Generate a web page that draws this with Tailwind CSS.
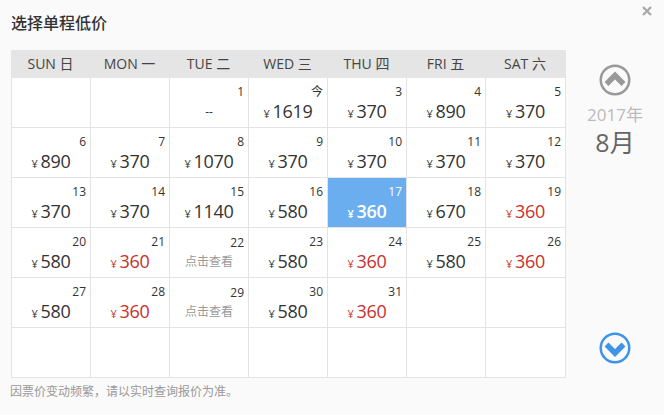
<!DOCTYPE html>
<html lang="zh">
<head>
<meta charset="utf-8">
<title>选择单程低价</title>
<script src="https://cdn.jsdelivr.net/npm/@tailwindcss/browser@4"></script>
</head>
<body class="w-[664px] h-[415px] overflow-hidden bg-[#fafafa] font-['Open_Sans','Noto_Sans_CJK_SC',sans-serif] text-[#333]">
<div class="relative h-[415px] pl-[11px] pt-[13px]">
  <button class="absolute right-[11px] top-[5px] text-[#aaa]">
    <svg width="12" height="12" viewBox="0 0 12 12"><path d="M2 2l8 8M10 2l-8 8" stroke="currentColor" stroke-width="2.4"/></svg>
  </button>
  <h1 class="h-[20px] text-[16px] leading-[20px] font-medium text-[#333]">选择单程低价</h1>
  <div class="flex mt-[17px]">
    <div class="w-[555px] shrink-0">
      <div class="grid grid-cols-[repeat(6,79px)_80px] w-[555px] h-[28px] bg-[#e5e5e5] text-[14px] leading-[28px] text-center text-[#444]">
        <div>SUN 日</div><div>MON 一</div><div>TUE 二</div><div>WED 三</div><div>THU 四</div><div>FRI 五</div><div>SAT 六</div>
      </div>
      <div class="grid grid-cols-[repeat(6,79px)_80px] auto-rows-[50px] border-l border-[#e3e3e3] bg-white w-[555px] [&>div]:border-r [&>div]:border-b [&>div]:border-[#e3e3e3] [&>div]:text-center [&_i]:block [&_i]:not-italic [&_i]:h-[22px] [&_i]:pt-[5px] [&_i]:pr-[4px] [&_i]:text-right [&_i]:text-[12px] [&_i]:leading-[17px] [&_b]:block [&_b]:font-normal [&_b]:text-[18px] [&_b]:leading-[23px] [&_b]:tracking-[-0.3px] [&_s]:no-underline [&_s]:text-[11px] [&_s]:mr-[3px] [&_u]:block [&_u]:no-underline [&_u]:text-[12px] [&_u]:leading-[24px] [&_u]:text-[#999]">
        <div></div>
        <div></div>
        <div><i>1</i><u class="!text-[#333]">--</u></div>
        <div><i>今</i><b><s>¥</s>1619</b></div>
        <div><i>3</i><b><s>¥</s>370</b></div>
        <div><i>4</i><b><s>¥</s>890</b></div>
        <div><i>5</i><b><s>¥</s>370</b></div>

        <div><i>6</i><b><s>¥</s>890</b></div>
        <div><i>7</i><b><s>¥</s>370</b></div>
        <div><i>8</i><b><s>¥</s>1070</b></div>
        <div><i>9</i><b><s>¥</s>370</b></div>
        <div><i>10</i><b><s>¥</s>370</b></div>
        <div><i>11</i><b><s>¥</s>370</b></div>
        <div><i>12</i><b><s>¥</s>370</b></div>

        <div><i>13</i><b><s>¥</s>370</b></div>
        <div><i>14</i><b><s>¥</s>370</b></div>
        <div><i>15</i><b><s>¥</s>1140</b></div>
        <div><i>16</i><b><s>¥</s>580</b></div>
        <div class="bg-[#6aaef0] text-white"><i>17</i><b class="!font-semibold"><s>¥</s>360</b></div>
        <div><i>18</i><b><s>¥</s>670</b></div>
        <div><i>19</i><b class="text-[#c9302c]"><s>¥</s>360</b></div>

        <div><i>20</i><b><s>¥</s>580</b></div>
        <div><i>21</i><b class="text-[#c9302c]"><s>¥</s>360</b></div>
        <div><i class="!pt-[6px]">22</i><u>点击查看</u></div>
        <div><i>23</i><b><s>¥</s>580</b></div>
        <div><i>24</i><b class="text-[#c9302c]"><s>¥</s>360</b></div>
        <div><i>25</i><b><s>¥</s>580</b></div>
        <div><i>26</i><b class="text-[#c9302c]"><s>¥</s>360</b></div>

        <div><i>27</i><b><s>¥</s>580</b></div>
        <div><i>28</i><b class="text-[#c9302c]"><s>¥</s>360</b></div>
        <div><i class="!pt-[6px]">29</i><u>点击查看</u></div>
        <div><i>30</i><b><s>¥</s>580</b></div>
        <div><i>31</i><b class="text-[#c9302c]"><s>¥</s>360</b></div>
        <div></div>
        <div></div>

        <div></div><div></div><div></div><div></div><div></div><div></div><div></div>
      </div>
      <p class="mt-[5px] -ml-[1px] text-[12px] leading-[17px] text-[#999]">因票价变动频繁，请以实时查询报价为准。</p>
    </div>
    <div class="w-[98px] shrink-0 flex flex-col items-center pt-[14px]">
      <svg class="shrink-0" width="32" height="32" viewBox="0 0 32 32"><circle cx="16" cy="16" r="14.25" fill="none" stroke="#999" stroke-width="2.5"/><path d="M7.5 20L16 11.5l8.5 8.5" fill="none" stroke="#999" stroke-width="5.5"/></svg>
      <div class="mt-[8px] text-[17px] leading-[22px] text-[#bbb]">2017年</div>
      <div class="text-[25px] leading-[32px] text-[#666]">8月</div>
      <svg class="shrink-0 mt-[174px]" width="32" height="32" viewBox="0 0 32 32"><circle cx="16" cy="16" r="14.25" fill="none" stroke="#3d94e8" stroke-width="2.5"/><path d="M7.5 12.5L16 21l8.5-8.5" fill="none" stroke="#3d94e8" stroke-width="5.5"/></svg>
    </div>
  </div>
</div>
</body>
</html>
